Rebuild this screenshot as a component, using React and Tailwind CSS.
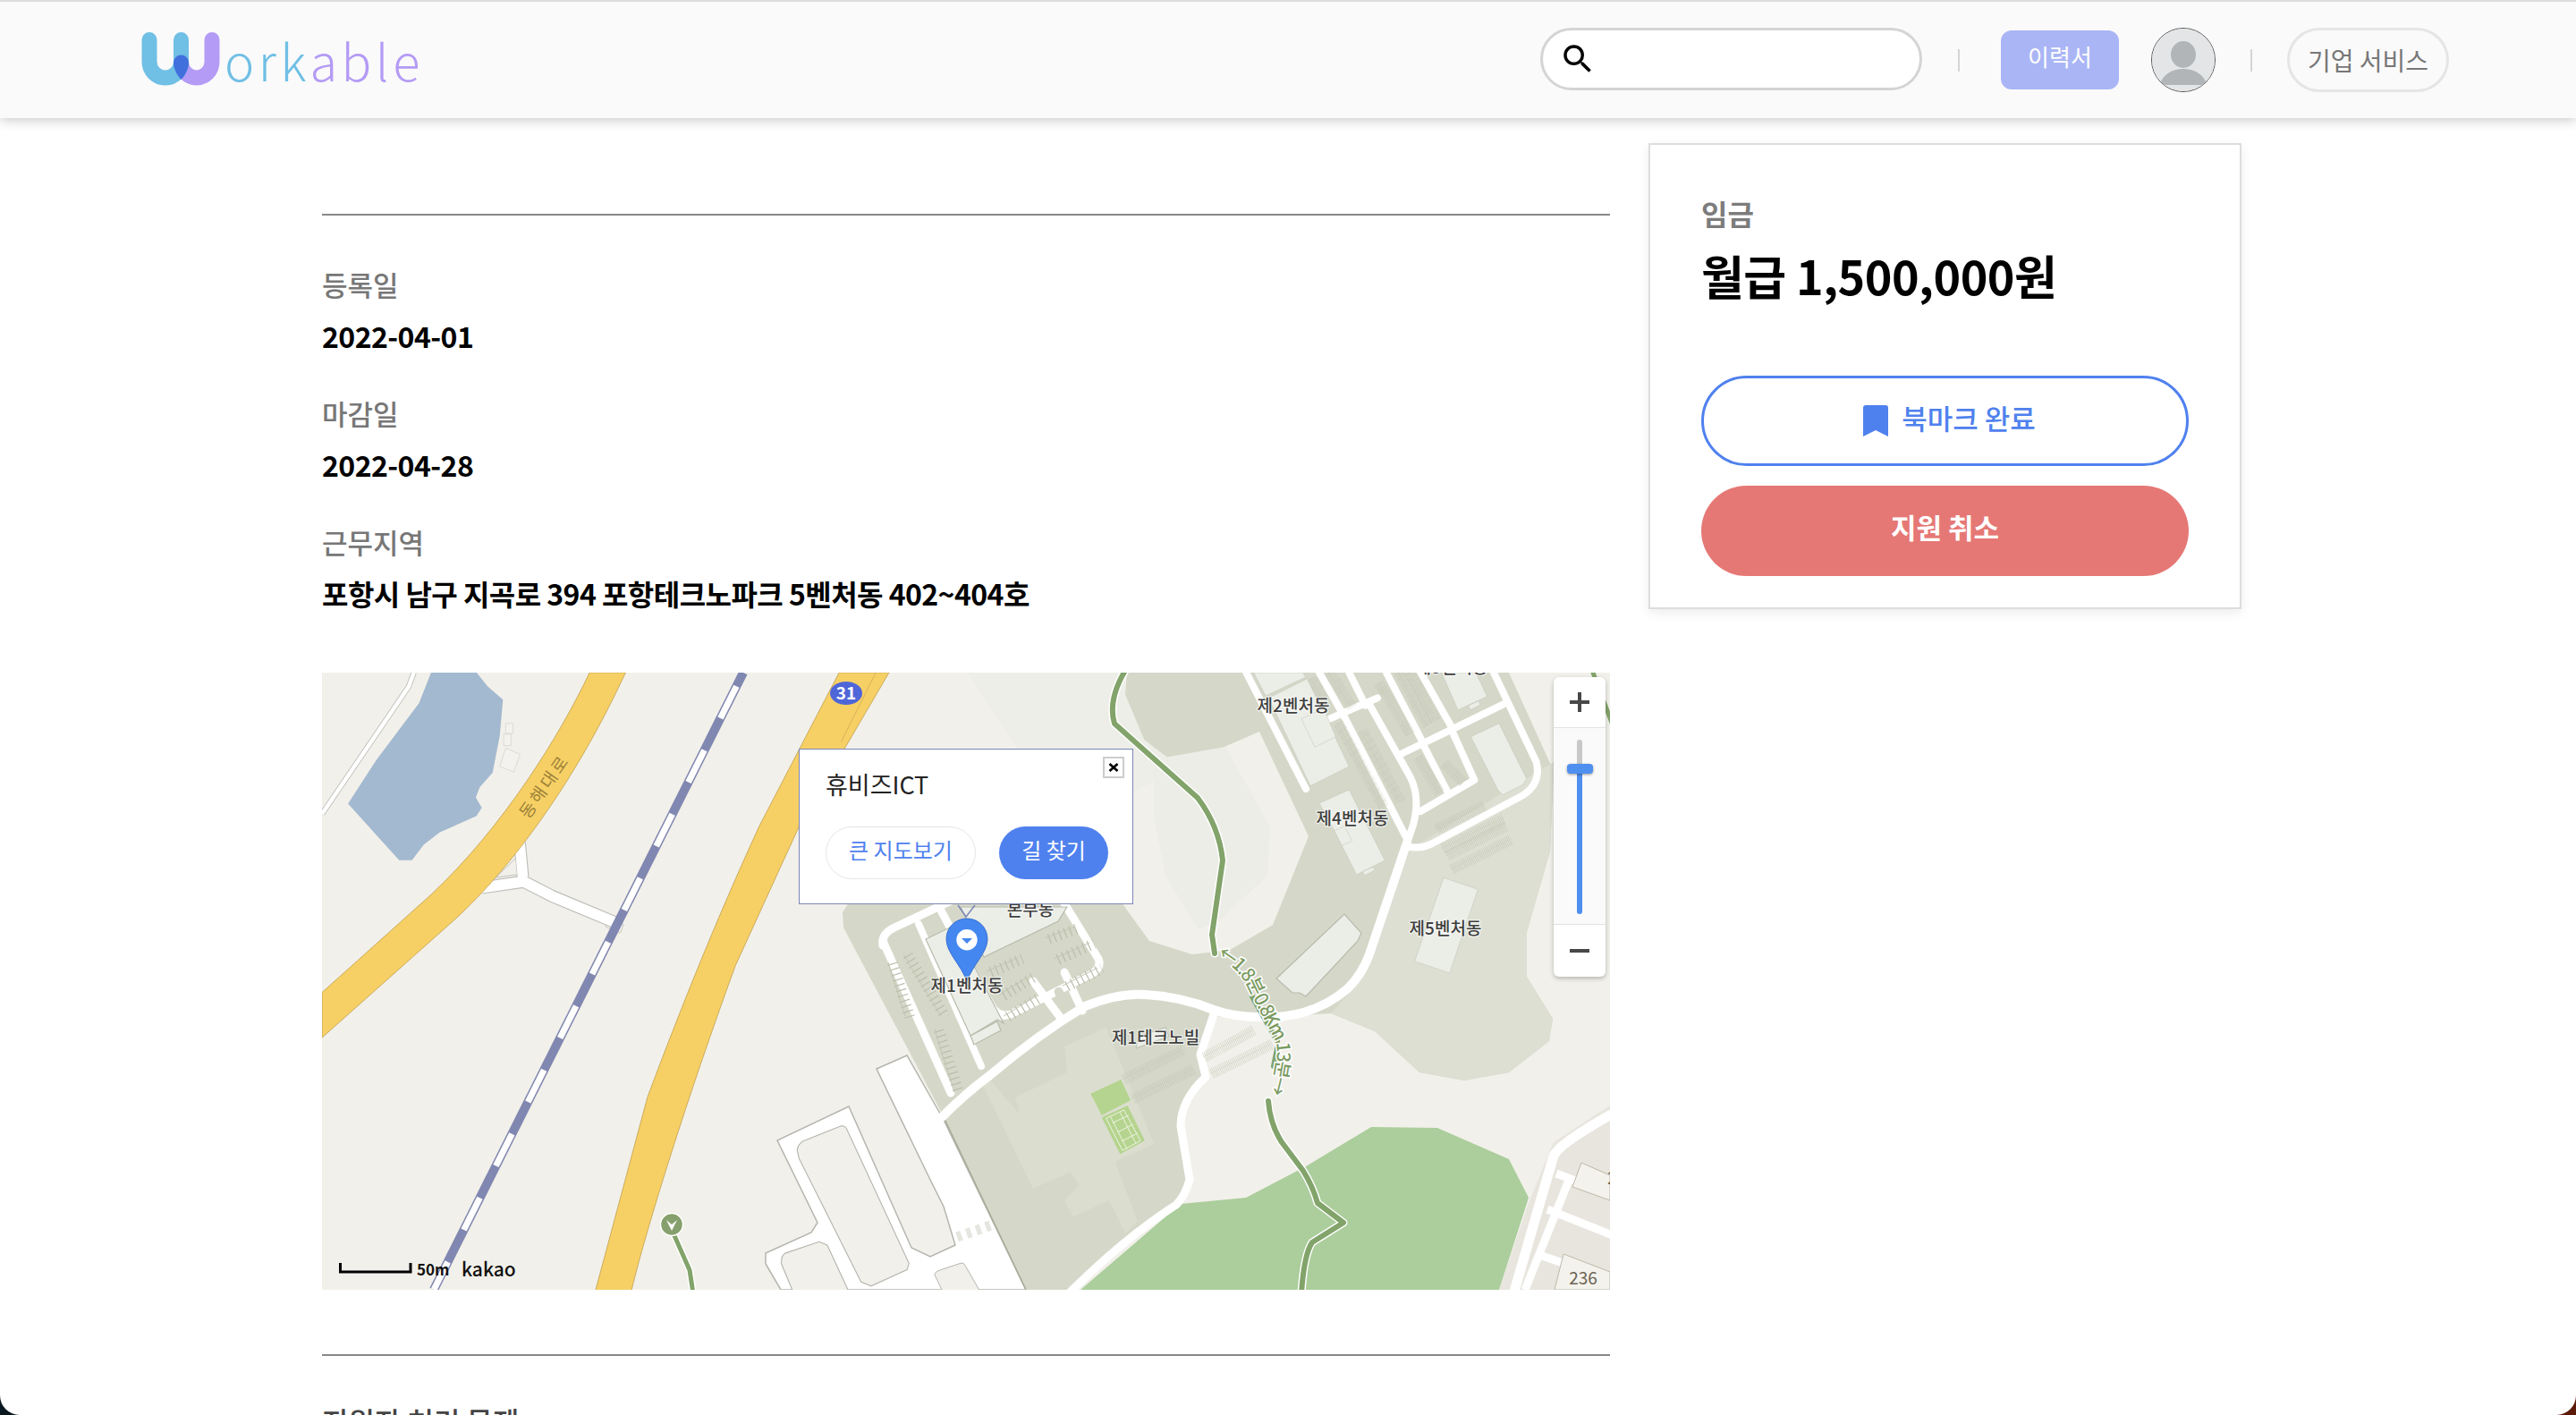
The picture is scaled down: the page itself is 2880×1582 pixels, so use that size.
import React from "react";
import { MdSearch } from "react-icons/md";

const A = "translate(930 0) scale(0.33333)";
const B = "translate(680 340) scale(0.33333)";
const Z = "translate(-20 -12) scale(0.4464 0.4591)";

function Road({ d, w = 10 }) {
  return <path d={d} fill="none" stroke="#ffffff" strokeWidth={w} strokeLinecap="round" strokeLinejoin="round" />;
}
function Park({ d, w = 12 }) {
  return (
    <g fill="none">
      <path d={d} stroke="#b9bdaa" strokeWidth={w} strokeDasharray="1.2 5" />
      <path d={d} stroke="#c2c6b4" strokeWidth="1" transform="translate(-5 -1)" />
    </g>
  );
}
function Bld({ p, f = "#ebede7" }) {
  return <polygon points={p} fill={f} stroke="#b7bbaa" strokeWidth="1.2" />;
}
function Label({ x, y, children, size = 19 }) {
  return (
    <text x={x} y={y} textAnchor="middle" fontSize={size} fontWeight="500" fill="#3f3f3f" stroke="#ffffff" strokeWidth="2.5" strokeOpacity="0.6" paintOrder="stroke">
      {children}
    </text>
  );
}

function MapArt() {
  return (
    <svg width="1440" height="690" viewBox="0 0 1440 690" className="block">
      <rect width="1440" height="690" fill="#f2f0ea" />

      {/* campus ground */}
      <polygon fill="#d5d8c9" points="898,0 1327,0 1377,110 1373,200 1347,290 1347,340 1376,387 1372,412 1327,447 1277,456 1227,447 1177,401 1128,381 1093,383 1047,388 998,384 985,425 990,452 963,485 958,507 970,567 960,592 837,690 780,690 695,497 681,470 583,285 582,268 600,240 700,240 840,240 880,100" />
      <polygon fill="#dcdfd2" points="1217,197 1377,100 1373,200 1347,290 1347,340 1376,387 1372,412 1327,447 1277,456 1227,447 1177,401 1128,381 1160,345" />
      <polygon fill="#f2f0ea" points="722,0 900,0 898,25 919,75 958,105 1048,66 1103,183 1063,282 1015,310 973,315 925,300 899,264 870,220 800,120" />
      <polygon fill="#eeeee8" points="722,0 898,0 898,25 919,75 958,105 880,150 800,120" />
      <polygon fill="#ecede7" points="930,97 1010,83 1060,173 1057,227 1003,277 980,287 943,227 930,160" />

      {/* lighter campus patches */}
      <g transform={B}>
        <polygon fill="#dbdecf" points="285,405 460,320 450,235 590,170 750,560 620,620 695,820 655,860 600,750 480,805 450,750 500,700 470,655 345,710 175,360 200,345 345,515 420,570 400,620 350,650" />
        <polygon fill="#b5d48f" points="538,392 640,345 672,415 575,465" />
        <polygon fill="#b5d48f" points="575,472 662,432 720,550 637,595" />
        <g fill="none" stroke="#eef3e2" strokeWidth="3">
          <polygon points="590,475 650,447 705,550 645,583" />
          <path d="M605,470 L660,578 M637,455 L690,560 M612,490 L665,465 M628,522 L680,495 M642,552 L695,525" />
        </g>
      </g>

      {/* park */}
      <polygon fill="#abce9c" points="848,690 960,594 1033,587 1100,552 1173,508 1247,509 1327,544 1349,587 1316,690" />

      {/* lake */}
      <g transform={Z}>
        <polygon fill="#a3b9d0" points="318,26 432,26 460,60 498,92 490,180 472,270 440,305 430,330 445,355 432,375 340,415 300,445 270,483 238,483 110,345 180,240 288,100" />
        <g fill="#f3f2ee" stroke="#d9d8d2" strokeWidth="2">
          <rect x="505" y="150" width="18" height="24" />
          <rect x="500" y="176" width="18" height="28" />
          <polygon points="505,210 541,225 525,268 490,255" />
        </g>
        <path d="M275,26 L262,60 L45,370" fill="none" stroke="#bdbdb8" strokeWidth="14" />
        <path d="M275,26 L262,60 L45,370" fill="none" stroke="#ffffff" strokeWidth="10" />
        {/* junction */}
        <polygon points="760,625 800,640 792,660 755,645" fill="#f3f2ee" stroke="#c4c4be" strokeWidth="2" />
        <path d="M445,550 L550,535 L620,570 L780,635 M540,440 L548,525" fill="none" stroke="#bdbdb8" strokeWidth="31" strokeLinejoin="round" />
        <polygon points="480,525 530,478 534,518" fill="#f2f0ea" stroke="#bdbdb8" strokeWidth="2" />
        <path d="M445,550 L550,535 L620,570 L780,635 M540,440 L548,525" fill="none" stroke="#ffffff" strokeWidth="26" strokeLinejoin="round" />
        {/* yellow roads */}
        <path d="M715,26 C640,180 500,400 320,565 L45,805 L45,915 L380,625 C520,500 680,290 805,26 Z" fill="#f7d065" stroke="#c4a555" strokeWidth="2" />
        <path d="M1340,26 L1140,400 C1050,590 960,800 860,1060 L730,1530 L820,1530 C860,1370 960,1060 1080,740 L1240,400 L1465,26 Z" fill="#f7d065" stroke="#c4a555" strokeWidth="2" />
        <path d="M1432,26 L1345,195" fill="none" stroke="#c4a555" strokeWidth="1.5" />
      </g>

      {/* railway */}
      <path d="M471,0 L125,690" fill="none" stroke="#8087b0" strokeWidth="10" />
      <path d="M471,0 L125,690" fill="none" stroke="#ffffff" strokeWidth="7" strokeDasharray="40 40" strokeDashoffset="-17" />

      {/* wide road and lower block */}
      <polygon fill="#ffffff" stroke="#b5b5ae" strokeWidth="1.5" points="620,443 654,428 695,500 787,690 513,690 496,661 496,649 547,626 554,615 509,523 589,485 659,643 680,653 708,640 695,597 680,567" />
      <g transform={Z} fill="#f2f0ea" stroke="#b5b5ae" strokeWidth="2.5">
        <path d="M1235,1190 Q1236,1175 1250,1167 L1345,1130 Q1357,1130 1360,1140 L1515,1465 L1510,1480 L1420,1520 L1395,1510 L1240,1210 Z" />
        <path d="M1195,1465 Q1195,1445 1205,1440 L1290,1412 L1310,1420 L1365,1535 L1225,1535 Z" />
      </g>
      <g transform={B}>
        <path d="M15,1000 Q15,990 30,985 L105,960 Q115,960 118,970 L165,1052 L40,1052 Z" fill="#f2f0ea" stroke="#b5b5ae" strokeWidth="3" />
        <path d="M90,873 L215,830" fill="none" stroke="#e6e6e0" strokeWidth="34" strokeDasharray="16 18" />
      </g>
      <polyline points="695,497 787,690" fill="none" stroke="#a9ac9a" strokeWidth="1.5" />

      {/* main curved road + branch */}
      <Road d="M693,497 Q720,470 747,450 Q800,405 853,373 Q890,358 920,360 Q960,362 997,377 Q1020,385 1047,385 Q1075,386 1097,380 Q1125,372 1147,353 Q1165,335 1173,309 L1213,190" w="10" />
      <Road d="M997,382 L982,427 L988,452 Q960,478 960,507 L970,567 Q965,585 955,595 Q900,630 837,692" w="9" />

      {/* right complex */}
      <g transform={A}>
        <Road d="M310,0 L510,390" w="24" />
        <Road d="M555,0 L640,150 L850,560" w="24" />
        <Road d="M655,0 L710,110" w="24" />
        <Road d="M590,155 L750,85" w="24" />
        <Road d="M725,110 L860,350 Q895,420 870,510 L850,570" w="24" />
        <Road d="M780,0 L900,230" w="24" />
        <Road d="M895,0 L1000,185" w="24" />
        <Road d="M1185,100 L1000,190 L835,270" w="24" />
        <Road d="M905,245 L985,400" w="24" />
        <Road d="M1000,195 L1075,360 L895,465" w="24" />
        <Road d="M1140,0 L1283,300 Q1300,370 1240,410 L930,575 Q900,590 860,585" w="24" />
        <path d="M668,152 L708,134" fill="none" stroke="#d5d8c9" strokeWidth="9" strokeLinecap="round" />

        <Bld p="335,0 375,78 510,15 500,0" />
        <Bld p="385,85 515,20 655,315 525,380" />
        <Bld p="495,155 570,120 610,215 540,250" />
        <Bld p="555,438 655,393 775,630 680,678 605,530" />
        <Bld p="605,530 640,515 665,565 630,580" />
        <Bld p="700,668 735,652 742,662 708,680" />
        <Bld p="972,688 1087,727 992,1008 875,968" />
        <Bld p="965,0 1080,0 1118,80 1020,125" />
        <Bld p="1055,110 1090,95 1095,108 1062,125" />
        <Bld p="1063,215 1158,170 1250,355 1240,375 1170,410 1155,395" />

        <Park d="M530,20 L575,100" w="36" />
        <Park d="M590,0 L665,115" w="36" />
        <Park d="M620,170 L770,450" w="36" />
        <Park d="M700,195 L830,435" w="36" />
        <Park d="M755,35 L860,205" w="36" />
        <Park d="M825,0 L920,180" w="36" />
        <Park d="M860,0 L945,160" w="36" />
        <Park d="M885,285 L960,405" w="36" />
        <Park d="M975,305 L1040,370" w="36" />
        <Park d="M950,525 L1110,445" w="36" />
        <Park d="M970,590 L1175,490" w="36" />
        <Park d="M985,615 L1180,515" w="36" />
        <Park d="M1000,660 L1200,560" w="36" />
      </g>
      <Bld p="1067,342 1143,270 1162,291 1158,300 1100,362 1093,358 1085,358" />

      {/* left campus complex */}
      <Road d="M627,300 L703,470" w="9" />
      <Road d="M667,281 L737,440" w="8" />
      <Road d="M627,305 Q625,292 640,285 L710,252 L825,250 L868,320 Q872,330 860,337 L770,382 Q755,387 747,370 L690,262" w="9" />
      <Road d="M795,345 L825,385" w="9" />
      <Road d="M830,335 L850,378" w="9" />
      <polygon fill="#ebede7" stroke="#b7bbaa" strokeWidth="1.2" points="675,298 706,283 762,392 755,388 725,406" />
      <polygon fill="#ebede7" stroke="#b7bbaa" strokeWidth="1.2" points="725,406 755,390 759,400 729,416" />
      <polygon fill="#ebede7" stroke="#b7bbaa" strokeWidth="1.2" points="740,318 823,278 833,262 740,262 714,262" />
      <rect x="808" y="319" width="17" height="22" rx="8" fill="#d5d8c9" transform="rotate(-25 816 330)" />
      <rect x="822" y="351" width="10" height="26" rx="5" fill="#d5d8c9" transform="rotate(-25 827 364)" />
      <Park d="M655,316 L697,385" w="12" />
      <Park d="M638,325 L657,385" w="12" />
      <Park d="M690,400 L712,470" w="12" />
      <Park d="M748,335 L783,320" w="12" />
      <Park d="M813,298 L847,285" w="12" />
      <Park d="M823,321 L863,303" w="12" />
      <Park d="M833,351 L872,331" w="12" />
      <Park d="M762,361 L795,341" w="12" />
      <Park d="M767,385 L800,365" w="12" />
      <g transform={B}>
        <Park d="M650,345 L850,245" w="36" />
        <Park d="M680,410 L885,310" w="36" />
        <Park d="M920,270 L1085,180" w="36" />
        <Park d="M945,325 L1150,225" w="36" />
        <polygon points="690,240 800,200 790,170 700,200" fill="#ebede7" stroke="#b7bbaa" strokeWidth="3" />
      </g>

      {/* bottom-right residential */}
      <polygon fill="#e7e5dd" points="1316,690 1350,590 1377,525 1440,484 1440,690" />
      <Road d="M1332,695 L1377,540 Q1385,525 1445,492" w="11" />
      <g fill="none" stroke="#ffffff" strokeWidth="9">
        <path d="M1380,560 L1445,585 M1370,600 L1445,630 M1358,650 L1445,680" />
        <path d="M1395,565 L1345,690" />
      </g>
      <polygon points="1408,548 1440,562 1440,590 1398,575" fill="#f4f2ec" stroke="#bdb9aa" strokeWidth="1" />
      <polygon points="1388,650 1440,670 1440,690 1378,690" fill="#f4f2ec" stroke="#bdb9aa" strokeWidth="1" />
      <text x="1410" y="684" textAnchor="middle" fontSize="19" fill="#6b6455">236</text>
      <text x="1437" y="572" fontSize="19" fill="#6b6455">2</text>

      {/* trails */}
      <g fill="none" strokeLinecap="round" strokeLinejoin="round">
        <path d="M899,-4 Q878,30 886,57 L979,140 Q1003,172 1007,210 L995,293 L998,314" stroke="#ffffff" strokeWidth="9" />
        <path d="M899,-4 Q878,30 886,57 L979,140 Q1003,172 1007,210 L995,293 L998,314" stroke="#82a36a" strokeWidth="6" />
        <path d="M1058,479 Q1060,505 1073,525 L1097,557 Q1108,575 1113,593 L1142,615 L1107,637 Q1098,650 1095,694" stroke="#ffffff" strokeWidth="9" />
        <path d="M1058,479 Q1060,505 1073,525 L1097,557 Q1108,575 1113,593 L1142,615 L1107,637 Q1098,650 1095,694" stroke="#82a36a" strokeWidth="6" />
        <path d="M1421,0 L1442,56" stroke="#82a36a" strokeWidth="5" />
        <path d="M392,625 L411,668 L415,694" stroke="#ffffff" strokeWidth="8" />
        <path d="M392,625 L411,668 L415,694" stroke="#82a36a" strokeWidth="5" />
        <path d="M1040,362 L1068,412" stroke="#82a36a" strokeWidth="6" />
        <path d="M1068,420 L1064,440" stroke="#82a36a" strokeWidth="6" />
      </g>
      <path id="trailText" d="M1000,317 C1020,328 1035,345 1040,362 L1066,412 C1072,430 1062,460 1058,478" fill="none" />
      <text fontSize="21" fontWeight="500" fill="#7d9c63" stroke="#ffffff" strokeWidth="3" paintOrder="stroke">
        <textPath href="#trailText" textLength="178">←1.8분 0.8Km 13분→</textPath>
      </text>
      <circle cx="391" cy="617" r="12.5" fill="#85a06c" stroke="#ffffff" strokeWidth="1.5" />
      <path d="M385,612 L391,617 L397,612 L391,624 Z" fill="#ffffff" />

      {/* labels */}
      <Label x={792} y={272}>본부동</Label>
      <Label x={1086} y={44}>제2벤처동</Label>
      <Label x={1152} y={170}>제4벤처동</Label>
      <Label x={1256} y={293}>제5벤처동</Label>
      <Label x={932} y={415}>제1테크노빌</Label>
      <Label x={1263} y={1}>제3벤처동</Label>
      <text x="250" y="128" textAnchor="middle" fontSize="19" letterSpacing="3" fill="#9c8138" transform="rotate(-55 250 128)" dominantBaseline="middle">동해대로</text>

      {/* route badge */}
      <ellipse cx="586" cy="23" rx="18" ry="13" fill="#4f66d8" />
      <text x="586" y="30" textAnchor="middle" fontSize="19" fontWeight="700" fill="#ffffff">31</text>

      {/* pin */}
      <path d="M721,275 C708,275 698,285 698,298 C698,313 714,326 721,345 C728,326 744,313 744,298 C744,285 734,275 721,275 Z" fill="#4487f0" stroke="#3b6fd0" strokeWidth="1" />
      <circle cx="721" cy="298.7" r="11.7" fill="#ffffff" />
      <path d="M715,297 H727 L721,303 Z" fill="#4487f0" />
      <path d="M711,260 L720,273 L730,260" fill="none" stroke="#7a86b8" strokeWidth="1.5" />
      <Label x={721} y={357}>제1벤처동</Label>

      {/* scale */}
      <path d="M20.5,660 V670 H99 V660" fill="none" stroke="#000000" strokeWidth="3" />
      <text x="106" y="674" fontSize="17" fontWeight="700" fill="#111111">50m</text>
      <text x="156" y="675" fontSize="21" fontWeight="500" fill="#111111">kakao</text>
    </svg>
  );
}

function Row({ label, value }) {
  return (
    <div className="mb-[43px]">
      <div className="text-[31px] leading-[44px] font-medium text-[#777777]">{label}</div>
      <div className="mt-[13px] text-[32px] leading-[44px] font-bold tracking-[-0.55px] text-black">{value}</div>
    </div>
  );
}

export default function App() {
  return (
    <div className="h-[1582px] overflow-hidden bg-[linear-gradient(90deg,#0a1822_50%,#5c1a08_50%)] font-['Noto_Sans_CJK_KR','Noto_Sans_KR',sans-serif]">
      <div className="h-[1582px] overflow-hidden rounded-b-[22px] bg-white">
        {/* Header */}
        <header className="relative z-10 flex h-[132px] items-center border-t-2 border-[#dddddd] bg-[#fafafa] pr-[142px] pl-[158px] shadow-[0_3px_12px_rgba(0,0,0,0.2)]">
          <svg width="88" height="62" viewBox="158 36 88 62" className="-mt-[2px] shrink-0">
            <path d="M202.5,71.5 V70 A17.25,18 0 0 0 237,70 V45.5" fill="none" stroke="#b49bf5" strokeWidth="17" strokeLinecap="round" />
            <path d="M167,45.5 V70 A17.75,18 0 0 0 202.5,70 V45.5" fill="none" stroke="#70bfe5" strokeWidth="17" strokeLinecap="round" />
            <path d="M194,71 a8.4 8.4 0 0 1 17,0 C211,78 207,85 202.5,90 C198,85 194,78 194,71 Z" fill="#416fdc" />
          </svg>
          <div className="ml-[5px] text-[56px] leading-none font-light tracking-[4.5px]">
            <span className="text-[#70bfe5]">ork</span>
            <span className="text-[#b49bf5]">able</span>
          </div>

          <div className="ml-auto flex h-[70px] w-[427px] items-center rounded-full border-[3px] border-[#d4d4d4] bg-white pl-[18px] -mt-[2px]">
            <MdSearch size={42} color="#000000" />
          </div>
          <div className="mr-[46px] ml-[40px] h-[25px] w-[2px] bg-[#d5d5d5]" />
          <button className="flex h-[66px] w-[132px] items-center justify-center rounded-[12px] bg-[#aab5f5] pb-[10px] text-[26px] text-white">이력서</button>
          <div className="ml-[36px] h-[72px] w-[72px] shrink-0 overflow-hidden rounded-full border border-[#555555]">
            <svg width="70" height="70" viewBox="0 0 70 70">
              <rect width="70" height="70" fill="#e3e5e7" />
              <ellipse cx="35" cy="29" rx="14" ry="15" fill="#b1b5b7" />
              <path d="M9,63 C11,52 22,45 35,45 C48,45 59,52 61,63 Z" fill="#b1b5b7" />
            </svg>
          </div>
          <div className="mx-[39px] h-[25px] w-[2px] bg-[#d5d5d5]" />
          <button className="flex h-[72px] w-[181px] items-center justify-center rounded-full border-[3px] border-[#e5e5e5] text-[28px] text-[#777777]">기업 서비스</button>
        </header>

        {/* Body */}
        <div className="flex items-start pl-[360px]">
          <main className="w-[1440px] shrink-0 pt-[107px]">
            <div className="h-[2px] bg-[#888888]" />
            <div className="pt-[55px]">
              <Row label="등록일" value="2022-04-01" />
              <Row label="마감일" value="2022-04-28" />
              <Row label="근무지역" value="포항시 남구 지곡로 394 포항테크노파크 5벤처동 402~404호" />
            </div>

            <div className="relative mt-[67px] h-[690px] w-[1440px] overflow-hidden">
              <MapArt />

              {/* info window */}
              <div className="absolute top-[85px] left-[533px] h-[174px] w-[374px] border-[1.5px] border-[#7a86b8] bg-white pt-[20px] pl-[29px]">
                <div className="text-[27px] leading-[38px] text-[#222222]">휴비즈ICT</div>
                <div className="mt-[28px] flex gap-[26px]">
                  <button className="flex h-[59px] w-[168px] items-center justify-center rounded-full border border-[#e5e5e5] pb-[8px] text-[24px] text-[#4f81ee]">큰 지도보기</button>
                  <button className="flex h-[59px] w-[122px] items-center justify-center rounded-full bg-[#4f81ee] pb-[8px] text-[24px] text-white">길 찾기</button>
                </div>
                <div className="absolute top-[8px] right-[9px] flex h-[24px] w-[24px] items-center justify-center border-2 border-[#cccccc] bg-white">
                  <svg width="12" height="10" viewBox="0 0 12 10">
                    <path d="M1.5,1 L10.5,9 M10.5,1 L1.5,9" stroke="#000000" strokeWidth="2.6" />
                  </svg>
                </div>
              </div>

              {/* zoom control */}
              <div className="absolute top-[5px] left-[1377px] flex h-[335px] w-[58px] flex-col overflow-hidden rounded-[6px] bg-white shadow-[0_2px_5px_rgba(0,0,0,0.25)]">
                <div className="flex h-[57px] items-center justify-center border-b border-[#e2e2e2]">
                  <svg width="22" height="22" viewBox="0 0 22 22"><path d="M11,0 V22 M0,11 H22" stroke="#484848" strokeWidth="4" /></svg>
                </div>
                <div className="relative h-[220px] border-b border-[#e2e2e2] bg-[#fbfafa]">
                  <div className="absolute top-[13px] left-[26px] h-[30px] w-[6px] rounded-t-full bg-[#c8c8c8]" />
                  <div className="absolute top-[40px] left-[26px] h-[168px] w-[6px] rounded-b-full bg-[#4f8ff0]" />
                  <div className="absolute top-[40px] left-[15px] h-[11px] w-[29px] rounded-[4px] bg-[#4f8ff0] shadow-[0_1px_3px_rgba(0,0,0,0.4)]" />
                </div>
                <div className="flex flex-1 items-center justify-center">
                  <svg width="22" height="4" viewBox="0 0 22 4"><rect width="22" height="4" fill="#484848" /></svg>
                </div>
              </div>
            </div>

            <div className="mt-[72px] h-[2px] bg-[#888888]" />
            <div className="mt-[48px] text-[32px] leading-[48px] font-medium text-[#444444]">지원자 처리 문제</div>
          </main>

          {/* Side card */}
          <aside className="mt-[28px] ml-[43px] h-[521px] w-[663px] shrink-0 border-2 border-[#dddddd] bg-white px-[57px] pt-[54px] shadow-[0_4px_12px_rgba(0,0,0,0.08)]">
            <div className="text-[32px] leading-[44px] font-bold text-[#7c7c7c]">임금</div>
            <div className="mt-[12px] text-[52px] leading-[72px] font-bold tracking-[-0.5px] text-black">월급 1,500,000원</div>
            <button className="mt-[76px] flex h-[101px] w-[545px] items-center justify-center gap-[15px] rounded-full border-[3px] border-[#4f81ee] bg-white pl-[10px] text-[31px] font-medium text-[#4f81ee]">
              <svg width="28" height="35" viewBox="0 0 28 35">
                <path d="M3,0 H25 a3 3 0 0 1 3 3 V35 L14,28 L0,35 V3 a3 3 0 0 1 3-3 Z" fill="#4f81ee" />
              </svg>
              <span className="pb-[6px]">북마크 완료</span>
            </button>
            <button className="mt-[22px] flex h-[101px] w-[545px] items-center justify-center rounded-full bg-[#e57875] pb-[8px] text-[31px] font-bold text-white">지원 취소</button>
          </aside>
        </div>
      </div>
    </div>
  );
}
